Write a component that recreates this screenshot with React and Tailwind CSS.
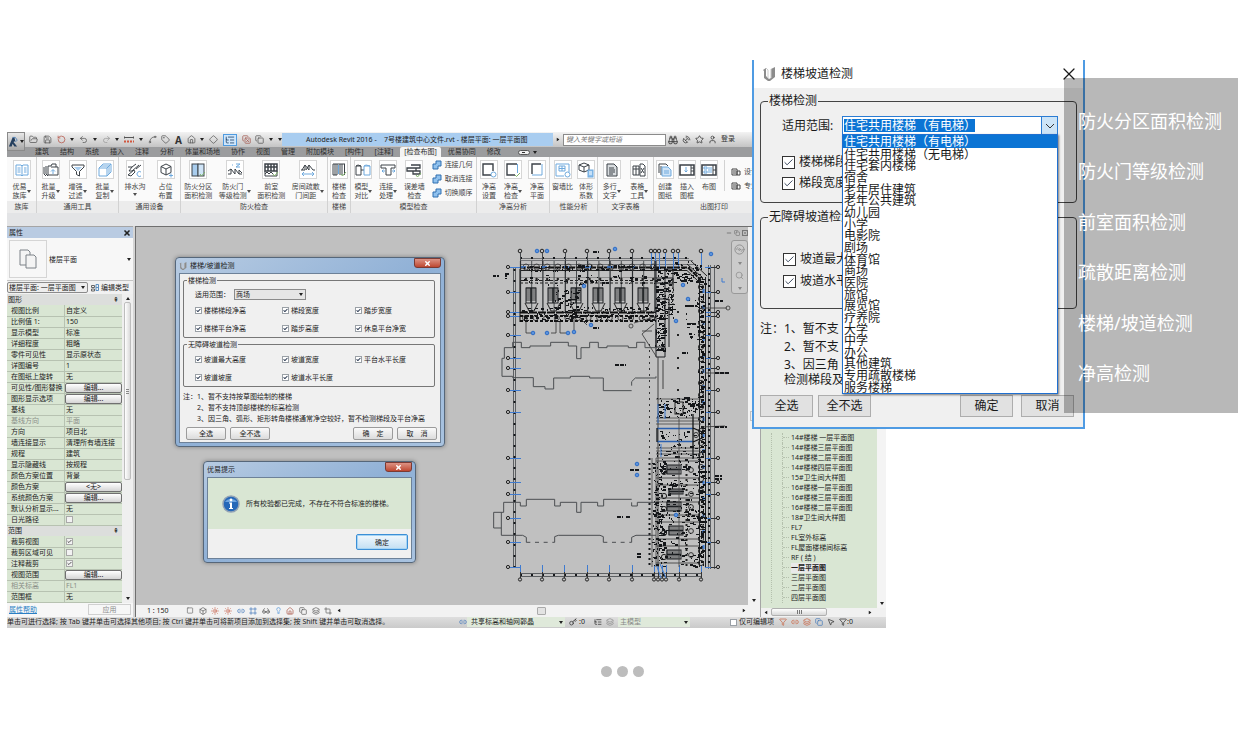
import React, { useState } from 'react';
import {
  FolderOpen, Save, RotateCcw, Undo2, Redo2, Ruler, Spline, Tag, House, Diamond, ListTree,
  CopyX, Copy, Binoculars, SatelliteDish, Star, User, X, Check, Box, Square, Sun, Crop,
  Glasses, Lightbulb, Frame, Search, Disc3, Funnel, MousePointer2, Layers, Link2, Minus, Key,
} from 'lucide-react';

const DARK = '#3c4248';
const BLUE = '#6ea9dd';

/* Ribbon pictograms, 16x16 */
const icons = {
  library: (
    <>
      <path d="M2 3h5l1 1v10l-1-1H2zM14 3H9L8 4M14 3v10H9l-1 1" stroke={BLUE} />
      <path d="M3.5 6h3M3.5 8h3M3.5 10h3M10 6h2.5M10 8h2.5M10 10h2.5" stroke={BLUE} />
    </>
  ),
  upgrade: (
    <>
      <path d="M1 5v7l2 2M3 4v8l2 2M5 4h3l1-2h4v3M5 4v9h10V5H8" stroke={DARK} />
      <path d="M10 12V8M8 9.5l2-2 2 2" stroke={BLUE} />
    </>
  ),
  filter: (
    <>
      <path d="M2 3h12v2L9.500 9.500V14L6.500 12.500V9.500L2 5z" stroke={DARK} />
      <path d="M4 5h8L8 9z" fill="#a9cdee" />
    </>
  ),
  copy: (
    <>
      <path d="M2 6h8v8H2zM4 4h8v8M6 2h8v8" stroke={BLUE} />
      <path d="M2 6l4-4M10 6l4-4M10 14l4-4" stroke={BLUE} />
    </>
  ),
  ditch: (
    <>
      <path d="M1 5h4L9 2M5 5l-3 4h3l7-6M1 13l6-5 1 2-4 4zM9 7l5-4" stroke={DARK} />
      <path d="M14 10a2.500 2.500 0 1 0 0 4" stroke={BLUE} />
    </>
  ),
  place: (
    <>
      <path d="M8 2l5 2.500v6L8 13l-5-2.500v-6zM3 4.500L8 7l5-2.500M8 7v6" stroke={DARK} />
      <path d="M11 13.500h4M13 11.500v4" stroke={BLUE} />
    </>
  ),
  zone: (
    <>
      <rect x="2" y="2" width="6" height="12" fill="#a9cdee" stroke={DARK} />
      <rect x="8" y="2" width="6" height="12" fill="#cfe4f7" stroke={DARK} />
      <path d="M10 12l1.500 2L15 10" stroke="#7fb36a" />
    </>
  ),
  door: (
    <>
      <path d="M1 12h3V7l4 5V7l4 5h3M1 9l3-2M12 12V8l3 3" stroke={DARK} />
      <path d="M5 3h1M9 2h4L9 5h4" stroke={BLUE} />
    </>
  ),
  lobby: (
    <>
      <path d="M2 2h12v7H2zM2 5h12M5 2v7M8 2v7M11 2v7" stroke={DARK} strokeWidth="1.5" />
      <path d="M2 9v5h12V9M2 12l2-2 2 2 2-2 2 2" stroke={DARK} />
      <path d="M10 12l1.500 2L15 10" stroke="#7fb36a" />
    </>
  ),
  gap: (
    <>
      <path d="M1 8h4V3l4 5V3l4 5h2M5 3L2 8M9 3L6 8" stroke={DARK} />
      <path d="M2 12h12M4 10l-2 2 2 2M12 10l2 2-2 2" stroke={BLUE} />
    </>
  ),
  stair: (
    <>
      <path d="M2 2v11M4 2v11M6 2v11M9 2v11M11 2v11M13.500 2v11M2 2h12M2 13h4" stroke={DARK} />
      <path d="M7.500 3v9" stroke={BLUE} />
      <path d="M10 12l1.500 2L15 10" stroke="#7fb36a" />
    </>
  ),
  compare: (
    <>
      <path d="M1 4l2-1 3 1v9H1zM1 4h5M6 8h3" stroke={DARK} />
      <path d="M9 4l2-1 4 1v9H9zM9 4h6" stroke={BLUE} />
    </>
  ),
  joint: (
    <>
      <path d="M1 3h14v3h-4v7H6V6H1z" stroke={DARK} />
      <path d="M2 9h3M12 9h3M3.500 7.500L2 9l1.500 1.500M13.500 7.500L15 9l-1.500 1.500" stroke={BLUE} />
    </>
  ),
  wallcheck: (
    <>
      <path d="M1 6h9v3H1zM5 3h9v3H10M7 9v3h7V9h-4" stroke={DARK} strokeWidth="1.3" />
      <path d="M10 13l1.500 2L15 11" stroke="#7fb36a" />
    </>
  ),
  heightset: (
    <>
      <path d="M10 13H2V2h10v7" stroke={DARK} strokeWidth="1.4" />
      <circle cx="12.500" cy="12.500" r="2.500" stroke={BLUE} />
    </>
  ),
  heightcheck: (
    <>
      <path d="M12 2H2v11h8" stroke={DARK} strokeWidth="1.4" />
      <path d="M12.500 2v9" stroke={BLUE} />
      <path d="M10 13l1.500 1.500L15 11" stroke="#7fb36a" />
    </>
  ),
  heightplan: (
    <>
      <path d="M3 12V2h9" stroke={DARK} strokeWidth="1.4" />
      <path d="M13 2v11H3" stroke={BLUE} />
    </>
  ),
  windowwall: (
    <>
      <path d="M1 2h13v8M1 2v12h8M4 4h6v5H4zM7 4v5M4 6.500h6" stroke={BLUE} />
      <circle cx="12.500" cy="12.500" r="2.500" stroke={BLUE} />
    </>
  ),
  shape: (
    <>
      <path d="M6 1l5 2v5l-5 2-5-2V3zM1 3l5 2 5-2M6 5v5" stroke={DARK} />
      <rect x="10" y="8" width="5" height="7" fill="#8fc1ee" stroke={BLUE} />
      <path d="M11 10h3M11 12h3" stroke="#fff" />
    </>
  ),
  text: (
    <>
      <path d="M3 2h7l3 3v9H3z" fill="#d9dde0" stroke={DARK} />
      <path d="M5 6h5M5 8h6M5 10h6M5 12h4" stroke={DARK} />
    </>
  ),
  table: (
    <>
      <path d="M2 4h6v9H2zM2 7h6M5 4v9M9 2h3l2 2v10H9z" stroke={DARK} />
      <path d="M10 6l3 5M13 6l-3 5" stroke={DARK} />
    </>
  ),
  sheet: (
    <>
      <path d="M2 11V2h7l2 2M4 13V4" stroke={DARK} />
      <path d="M5 5h6l3 3v6H5z" fill="#cfe4f7" stroke={BLUE} />
      <path d="M7 9h5M7 11h5" stroke={BLUE} />
    </>
  ),
  insert: (
    <>
      <path d="M1 3h14v10H1z" stroke={DARK} strokeWidth="1.6" />
      <path d="M12 3v10M12 6h3M12 9h3" stroke={DARK} />
      <path d="M7 5v5M5.500 8.500L7 10l1.500-1.500" stroke={BLUE} />
    </>
  ),
  arrange: (
    <>
      <path d="M1 3h14v10H1z" stroke={DARK} strokeWidth="1.6" />
      <path d="M12 3v10M12 8h3" stroke={DARK} />
      <path d="M3 5h3v2H3zM3 9h3v2H3zM8 5v6M10 5v6" stroke={BLUE} />
    </>
  ),
};

const Caret = ({ className = '' }) => (
  <svg viewBox="0 0 4 3" className={`h-[3px] w-[4px] shrink-0 ${className}`}>
    <path d="M0 0h4L2 3z" fill="#222" />
  </svg>
);

const ribbonGroups = [
  { title: '族库', width: 'w-[30px]', tools: [['library', '优易', '族库', 1]] },
  { title: '通用工具', width: 'w-[82px]', tools: [['upgrade', '批量', '升级', 1], ['filter', '增强', '过滤', 1], ['copy', '批量', '复制', 1]] },
  { title: '通用设备', width: 'w-[62px]', tools: [['ditch', '排水沟', '', 2], ['place', '占位', '布置', 0]] },
  { title: '防火检查', width: 'w-[147px]', tools: [['zone', '防火分区', '面积检测', 0], ['door', '防火门', '等级检测', 1], ['lobby', '前室', '面积检测', 0], ['gap', '房间疏散', '门间距', 1]] },
  { title: '楼梯', width: 'w-[23px]', tools: [['stair', '楼梯', '检查', 0]] },
  {
    title: '模型检查', width: 'w-[126px]',
    tools: [['compare', '模型', '对比', 1], ['joint', '连接', '处理', 1], ['wallcheck', '误差墙', '检查', 0]],
    stack: ['连接几何', '取消连接', '切换顺序'],
  },
  { title: '净高分析', width: 'w-[73px]', tools: [['heightset', '净高', '设置', 0], ['heightcheck', '净高', '检查', 1], ['heightplan', '净高', '平面', 0]] },
  { title: '性能分析', width: 'w-[48px]', tools: [['windowwall', '窗墙比', '', 0], ['shape', '体形', '系数', 0]] },
  { title: '文字表格', width: 'w-[56px]', tools: [['text', '多行', '文字', 1], ['table', '表格', '工具', 1]] },
  { title: '出图打印', width: 'w-[121px]', tools: [['sheet', '创建', '图纸', 0], ['insert', '插入', '图框', 0], ['arrange', '布图', '', 0]], stack: ['设计说明', '专业会签'] },
];

const tabs = ['建筑', '结构', '系统', '插入', '注释', '分析', '体量和场地', '协作', '视图', '管理', '附加模块', '[构件]', '[注释]', '[检查布图]', '优易协同', '修改'];

const graphicRows = [
  ['视图比例', '自定义'], ['比例值 1:', '150'], ['显示模型', '标准'], ['详细程度', '粗略'],
  ['零件可见性', '显示原状态'], ['详图编号', '1'], ['在图纸上旋转', '无'],
  ['可见性/图形替换', '编辑...', 'button'], ['图形显示选项', '编辑...', 'button'],
  ['基线', '无'], ['基线方向', '平面', 'muted'], ['方向', '项目北'], ['墙连接显示', '清理所有墙连接'],
  ['规程', '建筑'], ['显示隐藏线', '按规程'], ['颜色方案位置', '背景'],
  ['颜色方案', '<无>', 'button'], ['系统颜色方案', '编辑...', 'button'],
  ['默认分析显示...', '无'], ['日光路径', false, 'check'],
];

const rangeRows = [
  ['裁剪视图', true, 'check'], ['裁剪区域可见', false, 'check'], ['注释裁剪', true, 'check'],
  ['视图范围', '编辑...', 'button'], ['相关标高', 'FL1', 'muted'], ['范围框', '无'],
];

const views = [
  '14#楼梯 一层平面图', '14#楼梯三层平面图', '14#楼梯二层平面图', '14#楼梯四层平面图', '15#卫生间大样图',
  '16#楼梯一层平面图', '16#楼梯三层平面图', '16#楼梯二层平面图', '18#卫生间大样图', 'FL7', 'FL室外标高',
  'FL屋面楼梯间标高', 'RF ( 结 )', '一层平面图', '三层平面图', '二层平面图', '四层平面图',
];

const placeTypes = [
  '住宅共用楼梯（有电梯）', '住宅共用楼梯（无电梯）', '住宅套内楼梯', '宿舍', '老年居住建筑', '老年公共建筑',
  '幼儿园', '小学', '电影院', '剧场', '体育馆', '商场', '医院', '旅馆', '展览馆', '疗养院', '大学', '中学',
  '办公', '其他建筑', '专用疏散楼梯', '服务楼梯',
];

const features = ['防火分区面积检测', '防火门等级检测', '前室面积检测', '疏散距离检测', '楼梯/坡道检测', '净高检测'];

/* Tick box used at both dialog sizes */
const Tick = ({ label, checked = true, large = false }) => (
  <label className={large ? 'flex items-center gap-1' : 'flex items-center gap-[2px]'}>
    <span className={large ? 'relative h-[13px] w-[13px]' : 'relative h-[7px] w-[7px]'}>
      <input
        type="checkbox"
        aria-label={label}
        defaultChecked={checked}
        className={`peer block h-full w-full appearance-none border bg-white ${large ? 'border-[#333]' : 'border-[#9aa0a6]'}`}
      />
      <Check
        strokeWidth={large ? 2 : 5}
        className="pointer-events-none absolute inset-px hidden h-[calc(100%-2px)] w-[calc(100%-2px)] text-[#2c3a52] peer-checked:block"
      />
    </span>
    {label}
  </label>
);

const QuickBar = () => {
  const tool = 'h-[9px] w-[9px] text-[#555]';
  return (
    <div className="flex w-[257px] shrink-0 items-center justify-between pl-1">
      <FolderOpen className={tool} />
      <Save className={tool} />
      <RotateCcw className="h-[9px] w-[9px] text-[#b5574a]" />
      <Caret />
      <Undo2 className={tool} />
      <Caret />
      <Redo2 className="h-[9px] w-[9px] text-[#999]" />
      <Caret />
      <svg viewBox="0 0 10 9" className="h-[9px] w-[10px]" fill="none">
        <path d="M0 2.500h10M0 1v3M10 1v3" stroke="#555" />
        <path d="M0 6.500h10" stroke="#d0563e" strokeWidth="2" strokeDasharray="2 1" />
      </svg>
      <Caret />
      <Spline className={tool} />
      <Tag className={tool} />
      <span className="text-[10px] font-bold leading-[12px] text-[#333]">A</span>
      <House className={tool} />
      <Caret />
      <Diamond className={tool} />
      <span className="border border-[#4f9be0] bg-[#cfe6fb] px-px">
        <ListTree className="h-[10px] w-[10px] text-[#24476e]" />
      </span>
      <CopyX className="h-[9px] w-[9px] text-[#a35a50]" />
      <Copy className={tool} />
      <Caret />
      <Caret />
    </div>
  );
};

const Ribbon = () => (
  <div className="flex h-[56px] overflow-hidden bg-[#fafafa]">
    {ribbonGroups.map((group) => (
      <section key={group.title} className={`flex shrink-0 flex-col border-r border-[#d2d2d2] ${group.width}`}>
        <div className="flex h-[44px] items-start justify-around pt-[3px]">
          {group.tools.map(([icon, top, bottom, caret]) => (
            <button key={icon} className="flex flex-col items-center text-[7px] leading-[9px] whitespace-nowrap text-[#444]">
              <span className="mb-[3px] flex h-[19px] w-[18px] items-center justify-center border border-[#d6d6d6] bg-white">
                <svg viewBox="0 0 16 16" fill="none" className="h-[16px] w-[16px]">{icons[icon]}</svg>
              </span>
              <span className="flex items-center">
                <span>{top}{bottom && <br />}{bottom}</span>
                {caret === 1 && <Caret className="opacity-80" />}
              </span>
              {caret === 2 && <Caret className="mt-[2px] opacity-80" />}
            </button>
          ))}
          {group.stack && (
            <div className={`flex flex-col gap-[4px] ${group.stack.length === 3 ? '' : 'ml-[2px] border-l border-[#d2d2d2] pt-[7px] pl-[6px]'}`}>
              {group.stack.map((name) => (
                <button key={name} className="flex items-center gap-[3px] text-[7px] leading-[10px] whitespace-nowrap text-[#444]">
                  <svg viewBox="0 0 10 10" className="h-[10px] w-[10px]">
                    {group.stack.length === 3 ? (
                      <path d="M1 4h3V1h5v5H6v3H1z" fill="#8fc1ee" stroke="#2f6fb0" />
                    ) : (
                      <path d="M1 2h5v6H1zM6 4h3v4H6zM2 4h3M2 6h3" fill="none" stroke="#444" />
                    )}
                  </svg>
                  {name}
                </button>
              ))}
            </div>
          )}
        </div>
        <h2 className="h-[12px] bg-[#ececec] text-center text-[7px] leading-[12px] whitespace-nowrap text-[#444]">{group.title}</h2>
      </section>
    ))}
  </div>
);

const Header = () => (
  <header className="bg-[#9b9c9e]">
    <div className="flex">
      <button aria-label="应用程序菜单" className="flex h-[19px] w-[18px] shrink-0 items-center justify-center gap-px border border-[#8a8a8a] bg-gradient-to-b from-[#e8e8e8] to-[#a8a8a8]">
        <svg viewBox="0 0 12 12" className="h-[12px] w-[12px]">
          <path d="M1 11L5 1h2l1 4-2 1 4 5H7L5 8l-1 3z" fill="#243f5f" />
          <path d="M5 1h3l2 3-2 2" fill="none" stroke="#4d7fb5" />
        </svg>
        <Caret />
      </button>
      <div className="min-w-0 flex-1">
        <div className="flex h-[15px] items-center bg-gradient-to-b from-[#f3f3f3] to-[#c4c4c4]">
          <QuickBar />
          <h1 className="h-[13px] w-[271px] bg-[#a9cdf0] pl-[24px] text-[7px] leading-[13px] whitespace-nowrap text-[#222]">
            Autodesk Revit 2016 - &nbsp;&nbsp; 7号楼建筑中心文件.rvt - 楼层平面: 一层平面图
          </h1>
          <Caret className="mx-[3px] -rotate-90" />
          <input
            aria-label="搜索"
            placeholder="键入关键字或短语"
            className="h-[12px] w-[103px] border border-[#8b8b8b] bg-white px-[2px] text-[7px] italic placeholder:text-[#777]"
          />
          <div className="flex items-center gap-[4px] pl-[2px] text-[7px] text-[#333]">
            <Binoculars className="h-[10px] w-[10px]" />
            <SatelliteDish className="h-[9px] w-[9px]" />
            <Star className="h-[9px] w-[9px]" />
            <User className="h-[9px] w-[9px]" />
            <a href="#login" className="whitespace-nowrap">登录</a>
          </div>
        </div>
        <nav className="flex h-[10px] items-end gap-[11px] pl-[10px] text-[7px] leading-[10px] whitespace-nowrap text-[#2c2c2c]">
          {tabs.map((tab) => (
            <a key={tab} href="#ribbon" className={tab === '[检查布图]' ? '-mx-1 rounded-t-xs bg-[#f4f4f4] px-1' : ''}>{tab}</a>
          ))}
          <span className="ml-[6px] flex items-center gap-[3px] self-center">
            <span className="flex h-[5px] w-[12px] items-center justify-center rounded-full border border-[#555] bg-[#eee]">
              <span className="h-px w-[3px] bg-[#333]" />
            </span>
            <Caret />
          </span>
        </nav>
      </div>
    </div>
    <Ribbon />
  </header>
);

const PropertyRow = ({ row: [label, value, kind] }) => (
  <tr className={`h-[11px] border-b border-[#b7c2b1] ${kind === 'muted' ? 'text-[#8a8f88]' : 'text-[#222]'}`}>
    <th scope="row" className="w-[58px] border-r border-[#b7c2b1] pl-[4px] text-left font-normal whitespace-nowrap">{label}</th>
    <td className="p-0 whitespace-nowrap">
      {kind === 'button' && (
        <button className="block h-[10px] w-full rounded-[2px] border border-[#707070] bg-gradient-to-b from-white to-[#d5d5d5] text-center leading-[8px]">{value}</button>
      )}
      {kind === 'check' && (
        <span className="relative ml-px block h-[7px] w-[7px]">
          <input type="checkbox" aria-label={label} defaultChecked={value} className="peer block h-[7px] w-[7px] appearance-none border border-[#a9a9a9] bg-[#f2f2f2]" />
          <Check strokeWidth={4} className="pointer-events-none absolute top-px left-px hidden h-[5px] w-[5px] text-[#333] peer-checked:block" />
        </span>
      )}
      {kind !== 'button' && kind !== 'check' && <span className="pl-px">{value}</span>}
    </td>
  </tr>
);

const SectionRow = ({ title }) => (
  <tr className="h-[11px] bg-[#dcdedc]">
    <th colSpan={2} className="pl-px text-left font-normal">
      <span className="flex items-center justify-between pr-[3px]">{title}<span className="text-[7px] leading-[9px]">⇞</span></span>
    </th>
  </tr>
);

const Properties = () => (
  <aside className="w-[126px] shrink-0 border-t border-[#a5a5a5] bg-[#f1f1f1] text-[7px] leading-[9px] text-[#222]">
    <div className="flex h-[11px] items-center justify-between bg-[#b9cbe2] px-[2px]">
      属性
      <X strokeWidth={5} className="h-[8px] w-[8px]" />
    </div>
    <div className="flex h-[43px] items-center border-b border-[#c5c5c5] bg-[#f7f7f7] pr-[2px]">
      <span className="ml-[2px] flex h-[38px] w-[38px] items-center justify-center border border-[#d5d5d5]">
        <svg viewBox="0 0 18 20" className="h-[20px] w-[18px]" fill="#f4f4f4" stroke="#7d8288">
          <path d="M1 1h8l2 2v13H1z" />
          <path d="M7 6h8l2 2v11H7z" />
        </svg>
      </span>
      <span className="ml-[2px] flex-1">楼层平面</span>
      <Caret />
    </div>
    <div className="flex h-[13px] items-center">
      <span className="relative flex items-center">
        <select aria-label="视图" className="h-[11px] w-[81px] appearance-none rounded-[2px] border border-[#8b8b8b] bg-[#ededed] pl-px text-[7px] leading-[9px]">
          <option>楼层平面: 一层平面图</option>
        </select>
        <Caret className="absolute right-[3px]" />
      </span>
      <button className="flex items-center gap-[2px] pl-[3px] whitespace-nowrap">
        <svg viewBox="0 0 8 8" className="h-[8px] w-[8px]" fill="none">
          <path d="M.5 1.500h3v2h-3zM.5 5h3v2h-3z" stroke="#666" />
          <path d="M5 .5h2.500v6H5zM5 3.500h2.500" stroke="#5b8fc0" />
        </svg>
        编辑类型
      </button>
    </div>
    <div className="flex">
      <table className="w-[115px] table-fixed border-collapse bg-[#d9e6d3]">
        <tbody>
          <SectionRow title="图形" />
          {graphicRows.map((row) => <PropertyRow key={row[0]} row={row} />)}
          <SectionRow title="范围" />
          {rangeRows.map((row) => <PropertyRow key={row[0]} row={row} />)}
        </tbody>
      </table>
      <div className="flex flex-1 flex-col items-center justify-between bg-[#efefef] py-[3px]">
        <Caret className="rotate-180" />
        <span className="mt-[2px] mb-auto flex h-[178px] w-[7px] flex-col items-center justify-center gap-px rounded-[2px] border border-[#bdbdbd] bg-gradient-to-r from-white to-[#dadada]">
          <span className="h-px w-[3px] bg-[#888]" />
          <span className="h-px w-[3px] bg-[#888]" />
          <span className="h-px w-[3px] bg-[#888]" />
        </span>
        <Caret />
      </div>
    </div>
    <div className="flex h-[14px] items-center justify-between bg-[#f7f7f7] px-[2px]">
      <a href="#help" className="text-[#2a7fc4] underline">属性帮助</a>
      <button disabled className="h-[11px] w-[43px] border border-[#d0d0d0] text-[#8b8b8b]">应用</button>
    </div>
  </aside>
);

const noise = (n) => {
  const v = Math.sin(n * 127.1 + 11.7) * 43758.5453;
  return v - Math.floor(v);
};

/* Tiny wall / fitting marks scattered over a region */
const Marks = ({ x, y, w, h, count, seed }) => (
  <g fill="#15171a">
    {Array.from({ length: count }, (_, i) => (
      <rect
        key={i}
        x={Math.round(x + noise(seed + i) * w)}
        y={Math.round(y + noise(seed + i + 500) * h)}
        width={noise(seed + i + 900) > 0.5 ? 1 : 3}
        height={noise(seed + i + 1300) > 0.6 ? 2 : 1}
      />
    ))}
  </g>
);

const StairCore = ({ x, y, w, h, vertical }) => (
  <g stroke="#1c1f22" fill="none">
    <rect x={x} y={y} width={w} height={h} />
    {vertical
      ? Array.from({ length: Math.floor(w / 2) }, (_, i) => <path key={i} d={`M${x + i * 2} ${y}v${h}`} strokeWidth=".8" />)
      : Array.from({ length: Math.floor(h / 2) }, (_, i) => <path key={i} d={`M${x} ${y + i * 2}h${w}`} strokeWidth=".8" />)}
    <path d={vertical ? `M${x} ${y + h / 2}h${w}` : `M${x + w / 2} ${y}v${h}`} strokeWidth="1.5" />
  </g>
);

const gridY = [268, 293, 313, 317, 336, 359, 369, 391, 413, 459, 483, 495, 519, 543, 568];
const gridTop = [519, 541, 564, 586, 608, 631, 650, 654, 658, 664, 672, 677, 700];
const gridBottom = [519, 541, 563, 586, 608, 631, 653, 657, 661, 665, 678, 700];
const tagsBlue = [[536, 252], [546, 252], [614, 250], [710, 255], [532, 334], [546, 334], [567, 334], [573, 333], [590, 326], [583, 287], [675, 322], [687, 300], [682, 286], [636, 465], [636, 476], [675, 516]];
const units = [466, 490, 503, 527, 551];

const FloorPlan = () => (
  <svg viewBox="488 244 250 344" className="h-[344px] w-[250px] shrink-0" fill="none" aria-label="一层平面图">
    {/* axis frame */}
    <g stroke="#5d6063">
      <path d="M512.500 269V568M514.500 269V568" />
      <path d="M707.500 266V570M709.500 266V570M713.500 266V570" />
      <path d="M519 259.500H688M519 261.500H692M519 265.500H694" strokeWidth=".8" />
      <path d="M519 574.500H700M519 577.500H700" />
    </g>
    <path d="M519 259H688M513.500 270V568M519 576H700" stroke="#15171a" strokeWidth="2" strokeDasharray="2 9" />
    <path d="M708 268V568" stroke="#15171a" strokeWidth="2" strokeDasharray="2 4" />
    {gridY.map((y) => (
      <g key={y}>
        <circle cx="507" cy={y} r="1.600" stroke="#222" />
        <circle cx="717" cy={y} r="1.600" stroke="#222" />
        <path d={`M509 ${y}.500H520M704 ${y}.500H710`} stroke="#3f7bd0" />
        <path d={`M710 ${y}.500H715`} stroke="#333" />
      </g>
    ))}
    {gridTop.map((x) => (
      <g key={x}>
        <circle cx={x} cy="252" r="1.800" stroke="#222" />
        <path d={`M${x}.500 254V270`} stroke={x > 640 ? '#3f7bd0' : '#44484c'} />
      </g>
    ))}
    {gridBottom.map((x) => (
      <g key={x}>
        <circle cx={x} cy="580.500" r="1.600" stroke="#222" />
        <path d={`M${x}.500 566V573`} stroke="#3f7bd0" />
        <path d={`M${x}.500 573V579`} stroke="#333" />
      </g>
    ))}

    {/* north wing */}
    <path d="M519 268.500H687L700 281" stroke="#111" strokeWidth="2" strokeDasharray="6 1" />
    <path d="M519 271.500H686L697 282M690 262L706 277M686 265L702 279" stroke="#222" />
    <path d="M519 284H655M519 281.500H655" stroke="#222" strokeDasharray="3 2" />
    <path d="M519 278.500H655" stroke="#777" strokeWidth=".7" />
    <path d="M519 313.500H655" stroke="#111" strokeWidth="2" strokeDasharray="8 1" />
    <path d="M519 317H655M519 322H655" stroke="#111" strokeWidth="2" strokeDasharray="3 2" />
    <path d="M519 270V323" stroke="#111" />
    {Array.from({ length: 13 }, (_, i) => (
      <g key={i}>
        <path d={`M${519.500 + i * 11.2} 262V313`} stroke="#2b2e31" strokeWidth={i % 2 ? '.8' : '1.2'} />
        <circle cx={525 + i * 10.6} cy="268" r="3" stroke="#333" strokeWidth=".8" />
        <circle cx={525 + i * 10.6} cy="280" r="1.200" fill="#222" />
        <circle cx={524 + i * 10.6} cy="319" r="2.500" stroke="#222" strokeWidth=".8" />
      </g>
    ))}
    {[525, 547, 570, 592, 614, 637].map((x) => (
      <g key={x}>
        <StairCore x={x} y={289} w={10} h={15} />
        <path d={`M${x - 1} 304l4 8h5l4-8`} stroke="#222" />
      </g>
    ))}
    <path d="M520 268H525M540 268H546M562 268H568M584 268H590M606 268H612M628 268H634" stroke="#3f7bd0" strokeWidth="1.500" />
    <Marks x={519} y={266} w={136} h={6} count={90} seed={3} />
    <Marks x={519} y={276} w={136} h={10} count={60} seed={60} />
    <Marks x={521} y={308} w={132} h={14} count={170} seed={140} />
    <Marks x={553} y={290} w={24} h={18} count={40} seed={720} />

    {/* corner core */}
    <path d="M655 262V348H664V270H672V290M655 300H668V348M664 348V358H655V330M655 279H672V284H655" stroke="#1c1f22" />
    <Marks x={654} y={268} w={18} h={50} count={140} seed={320} />
    <Marks x={654} y={318} w={10} h={34} count={70} seed={2720} />
    <Marks x={672} y={262} w={30} h={22} count={70} seed={420} />
    <path d="M668 284V315M672 284V305" stroke="#444" strokeDasharray="2 2" />
    <path d="M641 335l12-10M641 335l14 22M641 332h10M653 318l-20 6" stroke="#333" strokeWidth=".8" />
    <path d="M657 358V568M662 361V390" stroke="#333" strokeWidth=".9" />

    {/* east wing */}
    <path d="M698.500 280V568M704.500 278V568" stroke="#1c1f22" />
    <path d="M701.500 282V566" stroke="#111" strokeWidth="3" strokeDasharray="2 3" />
    <path d="M702.500 290V560" stroke="#3f7bd0" strokeDasharray="4 12" strokeWidth="2" />
    {Array.from({ length: 24 }, (_, i) => (
      <circle key={i} cx="700" cy={288 + i * 12} r="2.600" stroke="#222" strokeWidth=".9" />
    ))}
    <Marks x={697} y={282} w={6} h={284} count={160} seed={520} />
    <Marks x={684} y={300} w={14} h={45} count={20} seed={620} />
    {[313, 336, 359, 369, 391].map((y) => (
      <rect key={y} x="676" y={y - 1} width="2" height="2" fill="#222" />
    ))}

    {/* lobby with rounded end */}
    <path d="M655 400H700M655 419H700M655 422H700M655 425H700M655 449H700M655 452H700M655 455H700M655 459H700" stroke="#444" strokeWidth=".8" />
    <path d="M648.500 345V460" stroke="#333" strokeWidth="1" strokeDasharray="2 4" />
    <path d="M656 429.500H692M656 442.500H692" stroke="#2a5fae" strokeWidth="1.4" />
    <path d="M656 429V443M692 429L701 433V439L692 443M692 415V460" stroke="#15171a" strokeWidth="1.300" />
    <rect x="674" y="403" width="8" height="12" stroke="#222" />
    <circle cx="695" cy="436" r="2.500" stroke="#333" />
    <Marks x={656} y={398} w={42} h={20} count={100} seed={1720} />
    <Marks x={657} y={431} w={38} h={10} count={22} seed={1820} />
    <Marks x={656} y={444} w={42} h={14} count={40} seed={1920} />

    {/* dwelling units */}
    {units.map((y, i) => (
      <g key={y}>
        <StairCore x={666 + (i % 2) * 2} y={y} w={14} h={i === 1 ? 5 : 9} vertical />
        <path d={`M655 ${y - 4}H698M655 ${y + 13}H698`} stroke="#333" strokeWidth=".8" />
        <circle cx="690" cy={y + 5} r="2.400" stroke="#333" />
        <circle cx="663" cy={y + 7} r="2.600" stroke="#222" />
      </g>
    ))}
    <path d="M685.500 460V568" stroke="#222" strokeWidth="2" strokeDasharray="2 3" />
    <path d="M648.500 459V568" stroke="#15171a" strokeWidth="2" strokeDasharray="2 3" />
    <path d="M651 459V568M655 459V568M678 420V568" stroke="#444" strokeWidth=".8" />
    <path d="M657 405V424M660 445V458M664 405V420M659 565l6 14M655 565l5 14" stroke="#3f7bd0" />
    <Marks x={651} y={459} w={12} h={108} count={160} seed={2020} />
    <Marks x={663} y={459} w={34} h={108} count={150} seed={2320} />

    {/* outlines of the neighbouring blocks */}
    <g transform="translate(480 225) scale(.3333)" stroke="#4b4e51" strokeWidth="3">
      <path d="M95 371H70V403H63V457H95V461H157V488H192V495H218V462H228V462H268V457H326V462H367V500H452M452 485V473L463 462H525V457" />
      <path d="M95 371V355H121V371H147V366H209V355H262V366H287V404H300V371H326V355H352V371H378V366H442V371H467V355H492V371H525" />
    </g>
    <g transform="translate(480 400) scale(.3333)" stroke="#4b4e51" strokeWidth="3">
      <path d="M68 340V310H118V321H136V301H221V321H238V310H287V340H300V310H350V321H368V301H452M452 310V321H469V310H525" />
      <path d="M68 340H38V387H61V409H125L136 415V430M221 430V413L232 409H357L367 413V430M452 430V415L465 409H525M61 387V340" />
      <path d="M136 430H221M367 430H452" strokeDasharray="12 14" />
    </g>

    {/* callouts */}
    <g stroke="#333" strokeWidth=".8">
      <path d="M525 323V334H530M555 323V334H550M559 323V334H565M573 318V332M580 320l6 6M700 309H726M700 428l24-1M704 374h24" />
      <circle cx="727" cy="309" r="2" />
      <circle cx="630" cy="327" r="2" />
    </g>
    {tagsBlue.map(([x, y]) => (
      <circle key={`${x}-${y}`} cx={x} cy={y} r="1.800" fill="#5b93dc" stroke="#2d6cc6" />
    ))}
    <path d="M614 366h11M616 518h6M625 518h4M492 277h3M496 277h2M505 274v6M505 275h3M592 253h6M592 329h6M681 354h6M636 555h5M636 558h4M714 302h8M714 374h14M714 428h12M714 477h7M714 480h7M629 471h9M686 325h10M684 307h12" stroke="#15171a" strokeWidth="2" strokeDasharray="4 1" />
    <path d="M721 279v4h3" stroke="#3f7bd0" />
  </svg>
);

const Canvas = () => (
  <section className="flex min-w-0 flex-1 flex-col border-t border-l border-[#6f6f6f] bg-[#f0f0f0]">
    <div className="flex min-h-0 flex-1">
      <div className="flex flex-1 items-start justify-end bg-[#c0c0c0]">
        <div className="pt-[16px]"><FloorPlan /></div>
        <div className="-ml-[13px] flex flex-col items-end pt-[3px]">
          <div className="flex items-center gap-[2px] text-[#666]">
            <Minus strokeWidth={3} className="h-[6px] w-[6px]" />
            <Copy className="h-[6px] w-[6px]" />
            <X strokeWidth={3} className="h-[6px] w-[6px] border border-[#777]" />
          </div>
          <div className="mt-[4px] flex h-[54px] w-[17px] flex-col items-center justify-around rounded-[3px] border border-[#999] bg-[#cbcbcb] text-[#8d8d8d]">
            <Disc3 className="h-[11px] w-[11px]" />
            <Caret className="opacity-40" />
            <Search className="h-[9px] w-[9px]" />
            <Caret className="opacity-40" />
          </div>
        </div>
      </div>
      <div className="flex w-[12px] flex-col items-center justify-between bg-[#f2f2f2] py-[3px]">
        <Caret className="rotate-180" />
        <span className="h-[10px] w-[8px] border border-[#c2c2c2]" />
        <Caret />
      </div>
    </div>
    <div className="flex h-[12px] items-center bg-[#f2f2f2] pl-[11px] text-[#555]">
      <span className="w-[39px] text-[7px] leading-[10px] text-[#222]">1 : 150</span>
      <div className="flex w-[155px] items-center justify-between">
        <Square className="h-[7px] w-[8px]" />
        <Box className="h-[8px] w-[8px]" />
        <Sun className="h-[8px] w-[8px] text-[#c2543d]" />
        <Sun className="h-[8px] w-[8px] text-[#c2543d]" />
        <Link2 className="h-[8px] w-[8px] text-[#3c74b8]" />
        <Frame className="h-[8px] w-[8px] text-[#3c74b8]" />
        <Glasses className="h-[8px] w-[8px]" />
        <Lightbulb className="h-[7px] w-[7px] text-[#3c8ad8]" />
        <House className="h-[8px] w-[8px] text-[#a8503f]" />
        <Copy className="h-[8px] w-[8px]" />
        <Layers className="h-[8px] w-[8px]" />
        <Crop className="h-[8px] w-[8px]" />
        <Caret className="rotate-90" />
      </div>
      <div className="flex flex-1 items-center justify-between pr-[14px]">
        <span />
        <span className="h-[8px] w-[9px] rounded-[1px] border border-[#aaa] bg-[#e3e3e3]" />
        <Caret className="-rotate-90" />
      </div>
    </div>
  </section>
);

const Browser = () => (
  <aside className="flex w-[126px] shrink-0 flex-col overflow-hidden border-t border-l border-[#a5a5a5] bg-[#f1f1f1]">
    <div className="flex flex-1">
      <div className="flex flex-1 flex-col justify-end bg-[#d9e6d3] pb-[5px]">
        <ul className="ml-[10px] border-l border-dotted border-[#b4c0ad] pl-[10px] text-[7px] leading-[10px] whitespace-nowrap text-[#222]">
          {views.map((view) => (
            <li key={view} className="flex items-center border-l border-dotted border-[#b4c0ad]">
              <span className="mr-[2px] w-[6px] border-t border-dotted border-[#b4c0ad]" />
              <span className={view === '一层平面图' ? 'bg-[#e9e9e9] font-bold' : ''}>{view}</span>
            </li>
          ))}
        </ul>
      </div>
      <div className="flex w-[9px] flex-col items-center justify-end bg-[#f4f4f4] pb-[3px]"><Caret /></div>
    </div>
    <div className="flex h-[9px] items-center justify-between pr-[14px] pl-[3px]">
      <Caret className="rotate-90" />
      <span className="mr-auto ml-[3px] flex h-[8px] w-[56px] items-center justify-center gap-px rounded-[2px] border border-[#b0b0b0] bg-gradient-to-b from-white to-[#d8d8d8]">
        <span className="h-[4px] w-px bg-[#777]" />
        <span className="h-[4px] w-px bg-[#777]" />
        <span className="h-[4px] w-px bg-[#777]" />
      </span>
      <Caret className="-rotate-90" />
    </div>
  </aside>
);

const StatusBar = () => (
  <footer className="flex h-[11px] items-center bg-gradient-to-b from-[#dedede] to-[#cacaca] text-[7px] leading-[10px] whitespace-nowrap text-[#222]">
    <p className="w-[452px] shrink-0 overflow-hidden">
      单击可进行选择; 按 Tab 键并单击可选择其他项目; 按 Ctrl 键并单击可将新项目添加到选择集; 按 Shift 键并单击可取消选择。
    </p>
    <Link2 className="h-[8px] w-[8px] shrink-0 text-[#3c74b8]" />
    <span className="relative flex shrink-0 items-center">
      <select aria-label="工作集" className="h-[10px] w-[98px] appearance-none bg-[#dfe9da] pl-1 text-[7px] leading-[10px]">
        <option>共享标高和轴网郭晶</option>
      </select>
      <Caret className="absolute right-[2px]" />
    </span>
    <Key className="ml-1 h-[8px] w-[8px] shrink-0" />
    <span className="w-[17px] pl-[2px]">:0</span>
    <ListTree className="mr-1 h-[8px] w-[8px] shrink-0" />
    <Layers className="mr-1 h-[8px] w-[8px] shrink-0 text-[#888]" />
    <span className="relative flex shrink-0 items-center">
      <select aria-label="设计选项" className="h-[10px] w-[72px] appearance-none bg-[#dfe9da] pl-[2px] text-[7px] leading-[10px] text-[#888]">
        <option>主模型</option>
      </select>
      <Caret className="absolute right-[2px]" />
    </span>
    <span className="ml-auto"><Tick label="仅可编辑项" checked={false} /></span>
    <div className="flex items-center gap-[4px] pr-[33px] pl-[5px]">
      <Funnel className="h-[8px] w-[8px] text-[#c8603f]" />
      <Link2 className="h-[8px] w-[8px] text-[#c8603f]" />
      <Layers className="h-[8px] w-[8px] text-[#c8603f]" />
      <Copy className="h-[8px] w-[8px] text-[#3c74b8]" />
      <MousePointer2 className="h-[8px] w-[8px]" />
      <span className="flex items-center"><Funnel className="h-[8px] w-[8px]" />:0</span>
    </div>
  </footer>
);

const smallButton = 'h-[13px] w-[40px] rounded-[2px] border border-[#9b9b9b] bg-gradient-to-b from-[#fafafa] to-[#dcdcdc] text-center leading-[10px]';

const GlassWindow = ({ title, logo, className, children }) => (
  <section className={`absolute rounded-[4px] border border-[#56677a] bg-gradient-to-br from-[#b7cbe2] via-[#8fb0d6] to-[#a9c3e0] px-[3px] pb-[3px] text-[7px] leading-[9px] text-[#222] shadow-[0_0_4px_rgba(0,0,0,0.35)] ${className}`}>
    <header className="flex h-[15px] items-start justify-between">
      <h2 className="flex items-center gap-[3px] pt-[3px]">
        {logo && <Logo className="h-[8px] w-[8px]" />}
        {title}
      </h2>
      <button aria-label="关闭" className="flex h-[10px] w-[27px] items-center justify-center rounded-b-[3px] border border-[#7b3a33] bg-gradient-to-b from-[#dc9284] to-[#bd4630]">
        <X strokeWidth={5} className="h-[7px] w-[7px] text-white" />
      </button>
    </header>
    <div className="border border-[#6d8198] bg-[#f0f0f0]">{children}</div>
  </section>
);

const Logo = ({ className }) => (
  <svg viewBox="0 0 12 14" className={className}>
    <path d="M0 3l3-2v8l3 3 2-1V2l4-2v10l-5 4h-2L1 11V4z" fill="#8c8c8c" />
    <path d="M3 1l2 2v8l1 1M8 2v9" fill="none" stroke="#c9c9c9" />
  </svg>
);

const StairDialog = () => (
  <GlassWindow title="楼梯/坡道检测" logo className="top-[257px] left-[175px] w-[270px]">
    <div className="px-[3px] pt-[2px] pb-[2px]">
      <fieldset className="mr-[2px] h-[62px] rounded-[2px] border border-[#777] pr-[6px] pl-[11px]">
        <legend className="-ml-[8px] px-px">楼梯检测</legend>
        <div className="flex items-center gap-[4px] pt-[4px]">
          <label htmlFor="scope-small">适用范围：</label>
          <span className="relative flex items-center">
            <select id="scope-small" defaultValue="商场" className="h-[11px] w-[72px] appearance-none border border-[#8b8b8b] bg-[#e6e6e6] pl-px text-[7px] leading-[9px]">
              {placeTypes.map((type) => <option key={type}>{type}</option>)}
            </select>
            <Caret className="absolute right-[3px]" />
          </span>
        </div>
        <div className="grid grid-cols-[87px_73px_1fr] gap-y-[9px] pt-[6px]">
          {['楼梯梯段净高', '梯段宽度', '踏步宽度', '楼梯平台净高', '踏步高度', '休息平台净宽'].map((label) => <Tick key={label} label={label} />)}
        </div>
      </fieldset>
      <fieldset className="mt-[2px] mr-[2px] h-[47px] rounded-[2px] border border-[#777] pr-[6px] pl-[11px]">
        <legend className="-ml-[8px] px-px">无障碍坡道检测</legend>
        <div className="grid grid-cols-[87px_73px_1fr] gap-y-[9px] pt-[6px]">
          {['坡道最大高度', '坡道宽度', '平台水平长度', '坡道坡度', '坡道水平长度'].map((label) => <Tick key={label} label={label} />)}
        </div>
      </fieldset>
      <div className="pt-[4px] leading-[11px] whitespace-nowrap">
        <p>注：1、暂不支持按草图绘制的楼梯</p>
        <p className="pl-[14px]">2、暂不支持顶部楼梯的标高检测</p>
        <p className="pl-[14px]">3、因三角、弧形、矩形转角楼梯通常净空较好，暂不检测梯段及平台净高</p>
      </div>
      <div className="flex gap-[4px] pt-[3px] pl-[3px]">
        <button className={smallButton}>全选</button>
        <button className={smallButton}>全不选</button>
        <button className={`${smallButton} ml-auto`}>确　定</button>
        <button className={smallButton}>取　消</button>
      </div>
    </div>
  </GlassWindow>
);

const MessageDialog = () => (
  <GlassWindow title="优易提示" className="top-[461px] left-[203px] w-[213px]">
    <div className="flex h-[51px] items-center gap-[6px] bg-[#d9e6d3] pl-[14px]">
      <svg viewBox="0 0 18 18" className="h-[18px] w-[18px] shrink-0">
        <circle cx="9" cy="9" r="8" fill="#2467b8" stroke="#93a3b5" strokeWidth="1.500" />
        <path d="M3 7a6.500 5 0 0 1 12 0z" fill="#6ea5e0" />
        <circle cx="9" cy="5" r="1.400" fill="#fff" />
        <path d="M7 7.500h3V13h1v1H7v-1h1V8.500H7z" fill="#fff" />
      </svg>
      <p className="whitespace-nowrap">所有校验都已完成，不存在不符合标准的楼梯。</p>
    </div>
    <div className="flex h-[29px] items-start justify-end pt-[5px] pr-[3px]">
      <button className="h-[16px] w-[52px] rounded-[2px] border border-[#3c8fd6] bg-gradient-to-b from-[#f1f8fd] to-[#c3dff3] text-center shadow-[inset_0_0_0_1px_#a5d4f5]">确定</button>
    </div>
  </GlassWindow>
);

const bigButton = 'h-[22px] w-[53px] border border-[#adadad] bg-[#e1e1e1] text-center leading-[18px]';

const RampDialog = () => {
  const [scope, setScope] = useState(placeTypes[0]);
  return (
    <section className="absolute top-[60px] left-[752px] w-[333px] border-x-2 border-b-2 border-[#4f9be3] bg-[#f0f0f0] pb-[10px] text-[12px] leading-[14px] text-[#1a1a1a]">
      <header className="flex h-[28px] items-center bg-white pr-[4px] pl-[9px]">
        <Logo className="h-[14px] w-[12px]" />
        <h2 className="ml-[6px] flex-1">楼梯坡道检测</h2>
        <button aria-label="关闭"><X strokeWidth={1.5} className="h-[20px] w-[20px]" /></button>
      </header>
      <div className="px-[6px] pt-[6px]">
        <fieldset className="h-[109px] rounded-[4px] border border-[#444] pl-[21px]">
          <legend className="-ml-[14px] px-px">楼梯检测</legend>
          <div className="flex items-center pt-[8px]">
            <label htmlFor="scope" className="w-[60px] whitespace-nowrap">适用范围:</label>
            <div className="relative w-[216px]">
              <div className="flex h-[19px] items-center border border-[#2b7cd3] bg-white pl-px">
                <input id="scope" value={scope} onChange={(e) => setScope(e.target.value)} className="h-[13px] w-[131px] bg-[#0b74d4] text-white" />
                <button aria-label="展开" className="ml-auto flex h-[17px] w-[16px] items-center justify-center border-l border-[#2b7cd3] bg-[#cce4f7]">
                  <svg viewBox="0 0 10 6" className="h-[6px] w-[10px]" fill="none" stroke="#333"><path d="M1 1l4 4 4-4" /></svg>
                </button>
              </div>
              <ul role="listbox" className="absolute top-[18px] left-0 z-10 flex h-[260px] w-full flex-col justify-between border border-[#1f6fd0] bg-white text-[12px] leading-[11px] whitespace-nowrap shadow-[1px_1px_2px_rgba(0,0,0,0.5)]">
                {placeTypes.map((type, i) => (
                  <li
                    key={type}
                    role="option"
                    aria-selected={i === 0}
                    onClick={() => setScope(type)}
                    className={i === 0 ? 'bg-[#0b74d4] pl-px leading-[13px] text-white' : 'pl-px'}
                  >
                    {type}
                  </li>
                ))}
              </ul>
            </div>
          </div>
          <div className="flex flex-col gap-[7px] pt-[20px]">
            <Tick large label="楼梯梯段" />
            <Tick large label="梯段宽度" />
          </div>
        </fieldset>
        <fieldset className="mt-[7px] h-[99px] rounded-[4px] border border-[#444] pl-[22px]">
          <legend className="-ml-[15px] px-px">无障碍坡道检测</legend>
          <div className="flex flex-col gap-[8px] pt-[28px]">
            <Tick large label="坡道最大" />
            <Tick large label="坡道水平" />
          </div>
        </fieldset>
        <div className="pt-[11px] whitespace-nowrap">
          <p className="leading-[18px]">注：1、暂不支</p>
          <p className="pl-[24px] leading-[18px]">2、暂不支</p>
          <p className="pl-[24px] leading-[18px]">3、因三角</p>
          <p className="pl-[24px] leading-[12px]">检测梯段及</p>
        </div>
        <div className="flex gap-[5px] pt-[9px] pr-[3px]">
          <button className={bigButton}>全选</button>
          <button className={bigButton}>全不选</button>
          <button className={`${bigButton} mr-[3px] ml-auto`}>确定</button>
          <button className={bigButton}>取消</button>
        </div>
      </div>
    </section>
  );
};

const App = () => (
  <main className="relative min-h-screen bg-white pt-[132px] font-['Noto_Sans','Noto_Sans_CJK_SC',sans-serif]">
    <div className="mr-[359px] ml-[7px]">
      <Header />
      <div className="flex bg-[#e3e4e6] pt-[13px]">
        <Properties />
        <div className="w-[2px] bg-[#d5d5d5]" />
        <Canvas />
        <Browser />
      </div>
      <StatusBar />
    </div>

    <StairDialog />
    <MessageDialog />
    <RampDialog />

    <nav className="absolute top-[78px] left-[1064px] z-20 flex h-[335px] w-[174px] flex-col justify-between bg-black/28 pt-[30px] pb-[27px] pl-[14px] text-[18px] leading-[26px] whitespace-nowrap text-white">
      {features.map((name) => <a key={name} href="#feature">{name}</a>)}
    </nav>

    <div className="mt-[38px] flex justify-center gap-[5px]">
      {[0, 1, 2].map((n) => (
        <button key={n} aria-label={`第${n + 1}页`} className="h-[11px] w-[11px] rounded-full bg-[#bdbdbd]" />
      ))}
    </div>
  </main>
);

export default App;
